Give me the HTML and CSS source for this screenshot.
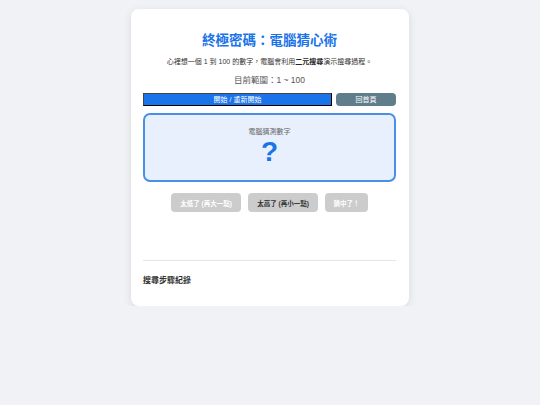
FILE: index.html
```html
<!DOCTYPE html>
<html lang="zh-Hant">
<head>
<meta charset="utf-8">
<title>終極密碼：電腦猜心術</title>
<link rel="stylesheet" href="styles.css">
</head>
<body>
<div class="card">
  <h1 class="title">終極密碼：電腦猜心術</h1>
  <p class="intro">心裡想一個 1 到 100 的數字，電腦會利用<b>二元搜尋</b>演示搜尋過程。</p>
  <p class="range">目前範圍：1 ~ 100</p>
  <div class="controls">
    <button class="btn-start">開始 / 重新開始</button>
    <button class="btn-home">回首頁</button>
  </div>
  <div class="guess-box">
    <div class="guess-label">電腦猜測數字</div>
    <div class="guess-value">?</div>
  </div>
  <div class="answers">
    <button class="ans ans-low" disabled>太低了 (再大一點)</button>
    <button class="ans ans-high">太高了 (再小一點)</button>
    <button class="ans ans-hit" disabled>猜中了！</button>
  </div>
  <div class="message"></div>
  <hr class="divider">
  <h3 class="log-title">搜尋步驟紀錄</h3>
</div>
</body>
</html>
```
FILE: styles.css
```css
html, body {
  margin: 0;
  padding: 0;
}
body {
  background: #f0f2f5;
  font-family: "Liberation Sans", "Noto Sans CJK TC", sans-serif;
  color: #333;
}
.card {
  box-sizing: border-box;
  width: 278px;
  margin: 9px auto 0;
  background: #fff;
  border-radius: 8px;
  box-shadow: 0 2px 8px rgba(0, 0, 0, 0.1);
  padding: 22px 13px 19px 12px;
  text-align: center;
}
.title {
  margin: 0;
  font-size: 13.5px;
  line-height: 20px;
  color: #1a73e8;
  font-weight: bold;
}
.intro {
  margin: 6px 0 0;
  font-size: 7px;
  line-height: 10px;
  color: #333;
}
.intro b {
  color: #222;
}
.range {
  margin: 7px 0 0;
  font-size: 8.5px;
  line-height: 12px;
  color: #555;
}
.controls {
  display: flex;
  gap: 4px;
  margin-top: 7px;
}
.controls button {
  font-family: inherit;
  font-size: 7px;
  line-height: 9px;
  height: 13px;
  padding: 0;
  color: #fff;
  cursor: pointer;
}
.btn-start {
  flex: 1;
  background: #1a73e8;
  border: 1px outset #444;
}
.btn-home {
  width: 60px;
  background: #607d8b;
  border: none;
  border-radius: 4px;
}
.guess-box {
  margin-top: 7px;
  height: 69px;
  box-sizing: border-box;
  border: 2px solid #4a8fe6;
  border-radius: 7px;
  background: #e8f0fe;
  padding-top: 12px;
}
.guess-label {
  font-size: 7px;
  line-height: 10px;
  color: #666;
}
.guess-value {
  font-size: 28px;
  line-height: 30px;
  font-weight: bold;
  color: #1a73e8;
}
.answers {
  display: flex;
  justify-content: center;
  gap: 7px;
  margin-top: 11px;
}
.ans {
  font-family: inherit;
  font-size: 6.5px;
  font-weight: bold;
  height: 19px;
  padding: 0 8px;
  border: none;
  border-radius: 4px;
  background: #cccccc;
  color: #fff;
}
.ans-low, .ans-high {
  width: 70px;
}
.ans-hit {
  width: 43px;
}
.ans-high {
  color: #333;
  cursor: pointer;
}
.message {
  height: 34px;
}
.divider {
  border: none;
  border-top: 1px solid #e6e6e6;
  margin: 14px 0 0;
}
.log-title {
  margin: 14px 0 0;
  text-align: left;
  font-size: 8px;
  line-height: 12px;
  font-weight: bold;
  color: #333;
}
```
